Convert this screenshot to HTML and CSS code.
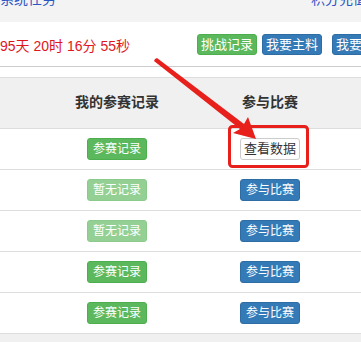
FILE: index.html
```html
<!DOCTYPE html>
<html lang="zh-cn">
<head>
  <meta charset="UTF-8">
  <title>参赛记录</title>
  <link rel="stylesheet" href="styles.css">
</head>
<body>

  <div class="topbar">
    <a class="link">系统任务</a>
    <a class="link">积分充值</a>
  </div>

  <div class="toolbar">
    <span class="countdown">95天 20时 16分 55秒</span>
    <div class="actions">
      <span class="btn btn-green">挑战记录</span>
      <span class="btn btn-blue">我要主料</span>
      <span class="btn btn-blue spaced">我要出题</span>
    </div>
  </div>

  <div class="spacer"></div>

  <div class="table">
    <div class="row head">
      <div></div>
      <div>我的参赛记录</div>
      <div>参与比赛</div>
      <div></div>
    </div>
    <div class="row">
      <div></div>
      <div><span class="btn btn-green">参赛记录</span></div>
      <div><span class="btn btn-default">查看数据</span></div>
      <div></div>
    </div>
    <div class="row">
      <div></div>
      <div><span class="btn btn-green disabled">暂无记录</span></div>
      <div><span class="btn btn-blue">参与比赛</span></div>
      <div></div>
    </div>
    <div class="row">
      <div></div>
      <div><span class="btn btn-green disabled">暂无记录</span></div>
      <div><span class="btn btn-blue">参与比赛</span></div>
      <div></div>
    </div>
    <div class="row">
      <div></div>
      <div><span class="btn btn-green">参赛记录</span></div>
      <div><span class="btn btn-blue">参与比赛</span></div>
      <div></div>
    </div>
    <div class="row">
      <div></div>
      <div><span class="btn btn-green">参赛记录</span></div>
      <div><span class="btn btn-blue">参与比赛</span></div>
      <div></div>
    </div>
  </div>

  <!-- 标注：箭头和红框 -->
  <svg class="mark" width="361" height="342" viewBox="0 0 361 342">
    <rect x="229.5" y="126.5" width="78" height="40" rx="3" fill="none" stroke="#e8201c" stroke-width="3"/>
    <polygon points="155,59 157,58 244,124 248,117 256,139 233,133 240,129 154,61" fill="#e8201c"/>
  </svg>

</body>
</html>
```

FILE: styles.css
```css
body {
  margin: 0;
  font-family: "Liberation Sans", "Noto Sans CJK SC", sans-serif;
  font-size: 14px;
  color: #333;
  background-color: #f0f0f0;
  width: 361px;
  height: 342px;
  overflow: hidden;
  position: relative;
}

.topbar {
  height: 22px;
  background-color: #f3f3f3;
  display: flex;
  justify-content: space-between;
  overflow: hidden;
}

.link {
  color: #2a56c6;
  font-size: 14px;
  line-height: 14px;
  margin-top: -8px;
}

.link:last-child {
  margin-right: -6px;
}

.toolbar {
  height: 44px;
  background-color: #fff;
  border-bottom: 1px solid #ccc;
  display: flex;
  align-items: center;
  overflow: hidden;
}

.countdown {
  flex-shrink: 0;
  width: 197px;
  color: #e0161c;
  font-size: 14px;
  margin-top: 1px;
}

.actions {
  display: flex;
  gap: 5px;
  white-space: nowrap;
}

.actions .btn {
  flex-shrink: 0;
  font-size: 13px;
}

.actions .spaced {
  margin-left: 5px;
}

.spacer {
  height: 10px;
  background-color: #fff;
  border-bottom: 1px solid #ddd;
}

.table {
  background-color: #fff;
}

.row {
  display: grid;
  grid-template-columns: 40px 154px 152px 1fr;
  height: 41px;
  box-sizing: border-box;
  align-items: center;
  text-align: center;
  border-bottom: 1px solid #ddd;
}

.row.head {
  height: 51px;
  background-color: #f0f0f0;
  font-weight: bold;
  color: #333;
  padding-bottom: 4px;
}

.btn {
  display: inline-block;
  box-sizing: border-box;
  width: 60px;
  height: 21px;
  line-height: 19px;
  font-size: 12px;
  border: 1px solid transparent;
  border-radius: 3px;
  color: #fff;
  text-align: center;
  white-space: nowrap;
}

.row .btn {
  height: 22px;
  line-height: 20px;
}

.btn-green {
  background-color: #5cb85c;
  border-color: #4cae4c;
}

.btn-blue {
  background-color: #337ab7;
  border-color: #2e6da4;
}

.btn-default {
  background-color: #fff;
  border-color: #ccc;
  color: #333;
  font-size: 13px;
}

.disabled {
  opacity: 0.65;
}

.mark {
  position: absolute;
  left: 0;
  top: 0;
  pointer-events: none;
}
```
